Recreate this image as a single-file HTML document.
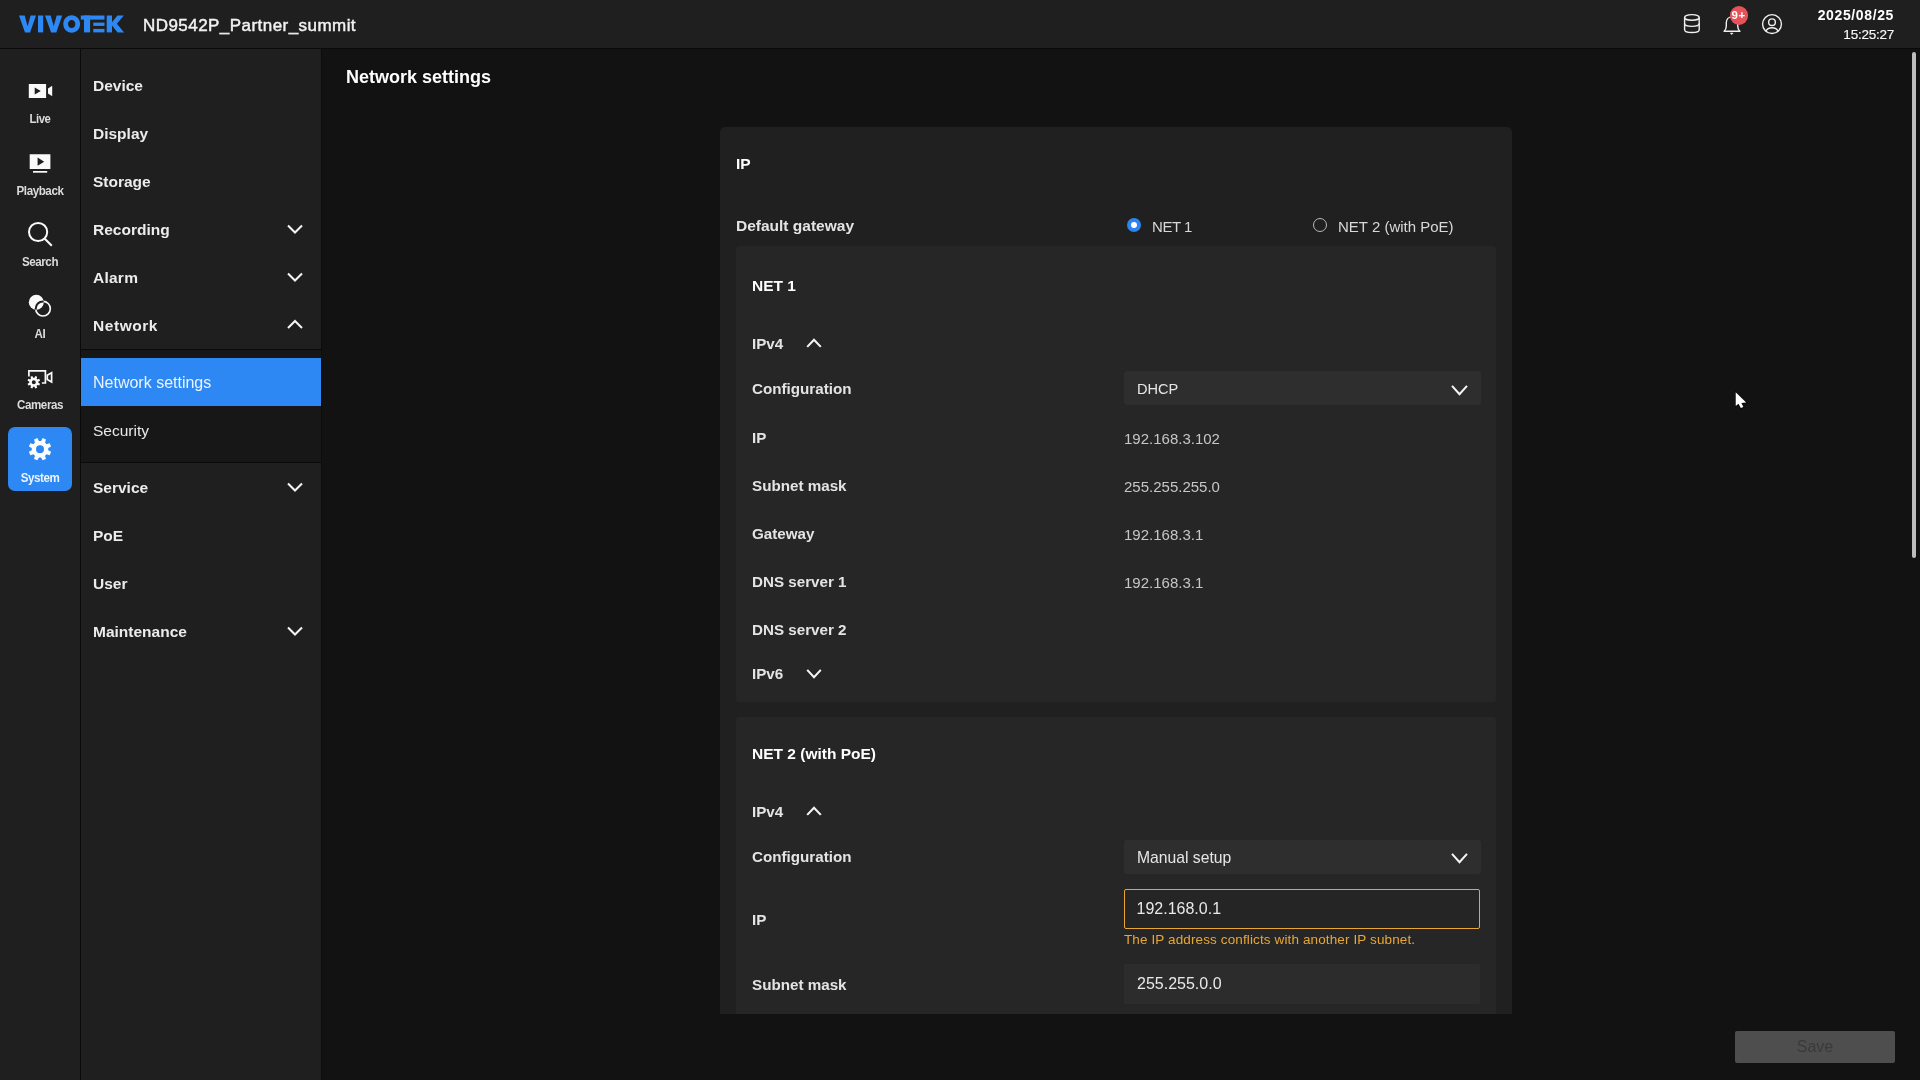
<!DOCTYPE html>
<html>
<head>
<meta charset="utf-8">
<title>Network settings</title>
<style>
*{box-sizing:border-box;margin:0;padding:0}
html,body{width:1920px;height:1080px;overflow:hidden;background:#121212}
body{position:relative;font-family:"Liberation Sans",sans-serif;color:#e6e6e6;font-size:15.5px}
.abs{position:absolute}
.t{position:absolute;white-space:nowrap;line-height:20px;height:20px}
.b{font-weight:700}
/* header */
#hdr{left:0;top:0;width:1920px;height:48px;background:#1f1f1f}
#hline{left:0;top:48px;width:1920px;height:1px;background:#0a0a0a}
/* icon rail */
#rail{left:0;top:49px;width:80px;height:1031px;background:#1f1f1f}
#vline1{left:80px;top:49px;width:1px;height:1031px;background:#0a0a0a}
#menu{left:81px;top:49px;width:240px;height:1031px;background:#1f1f1f}
#vline2{left:321px;top:49px;width:1px;height:1031px;background:#0c0c0c}
.rl{position:absolute;transform:scaleX(0.968);left:0;width:80px;text-align:center;font-weight:700;font-size:12px;letter-spacing:-0.45px;line-height:14px;color:#dcdcdc;white-space:nowrap}
.mi{position:absolute;left:93px;font-weight:700;font-size:15.5px;line-height:20px;color:#ececec;white-space:nowrap}
.ms{position:absolute;left:93px;font-weight:400;font-size:15.5px;line-height:20px;color:#e8e8e8;white-space:nowrap}
.chev{position:absolute}
/* card */
#card{left:720px;top:127px;width:792px;height:887px;background:#202020;border-radius:5px 5px 0 0}
.inner{position:absolute;left:736px;width:760px;background:#262626;border-radius:3px}
.lab{position:absolute;margin-top:0.8px;font-weight:700;font-size:15.200px;line-height:20px;color:#e4e4e4;white-space:nowrap}
.val{position:absolute;margin-top:0.5px;left:1124px;font-weight:400;font-size:15px;line-height:20px;color:#c6c6c6;white-space:nowrap}
.sel{position:absolute;left:1124px;width:357px;height:34px;background:#2e2e2e;border-radius:3px}
.sel span{position:absolute;left:13px;top:7.800px;font-size:15.7px;line-height:20px;color:#e6e6e6;white-space:nowrap}
.inp{position:absolute;left:1124px;width:356px;height:40px;background:#2c2c2c;border-radius:2px}
.inp span{position:absolute;left:13px;top:9.900px;font-size:16px;line-height:20px;color:#e8e8e8;white-space:nowrap}
</style>
</head>
<body>
<div id="layer" style="position:absolute;left:0;top:0;width:1920px;height:1080px;will-change:transform">
<!-- HEADER -->
<div id="hdr" class="abs"></div>
<div id="hline" class="abs"></div>
<!-- RAIL + MENU -->
<div id="rail" class="abs"></div>
<div id="vline1" class="abs"></div>
<div id="menu" class="abs"></div>
<div id="vline2" class="abs"></div>
<!-- logo -->
<svg class="abs" style="left:0;top:0" width="140" height="48" viewBox="0 0 140 48">
 <g fill="#2d88f4">
  <polygon points="19,15.5 24.7,15.5 27.6,26.2 30.6,15.5 36,15.5 30.1,32.4 25,32.4"/>
  <rect x="38" y="15.5" width="5.2" height="16.9"/>
  <polygon points="45,15.5 50.7,15.5 53.7,26.2 56.7,15.5 62.2,15.5 56.3,32.4 51.1,32.4"/>
  <path fill-rule="evenodd" d="M71.7 15.2c4.7 0 8.4 3.9 8.4 8.8s-3.7 8.8-8.4 8.8-8.4-3.9-8.4-8.8 3.700-8.800 8.400-8.800zm0 4.700c-2.100 0-3.700 1.800-3.700 4.100s1.600 4.100 3.700 4.100 3.700-1.800 3.700-4.100-1.600-4.100-3.700-4.100z"/>
  <rect x="80.8" y="15.500" width="23.700" height="4.100"/>
  <rect x="84" y="15.500" width="6.100" height="16.900"/>
  <rect x="93.300" y="22.600" width="11.200" height="3.300"/>
  <rect x="93.300" y="28.900" width="11.200" height="3.500"/>
  <rect x="106.700" y="15.500" width="5.300" height="16.900"/>
  <polygon points="112,22.300 117.400,15.500 123.800,15.500 116.900,23.800 124.100,32.400 117.600,32.400 112,25.600"/>
 </g>
</svg>
<div class="t" style="left:143px;top:15.500px;font-size:17px;-webkit-text-stroke:0.45px #f2f2f2;letter-spacing:0.45px;color:#f2f2f2">ND9542P_Partner_summit</div>
<!-- header icons -->
<svg class="abs" style="left:1676px;top:4px" width="112" height="40" viewBox="1676 4 112 40" fill="none" stroke="#f0f0f0" stroke-width="1.400">
 <!-- database -->
 <ellipse cx="1691.900" cy="17.400" rx="7.300" ry="2.800"/>
 <path d="M1684.600 17.400v12.300c0 1.600 3.300 2.800 7.300 2.800s7.300-1.200 7.300-2.800V17.400"/>
 <path d="M1684.600 23.600c0 1.600 3.300 2.800 7.300 2.800s7.300-1.200 7.300-2.800"/>
 <!-- bell -->
 <path d="M1724.100 31.300c1.500-1.300 2.200-3 2.200-5.300v-3.200c0-3.400 2.400-5.900 5.700-5.900s5.700 2.500 5.700 5.900v3.200c0 2.300 0.700 4 2.200 5.300z" stroke-linejoin="round"/>
 <path d="M1730.300 33.100h2.800l-1.400 1.500z" fill="#f0f0f0" stroke-width="0.600" stroke-linejoin="round"/>
 <!-- user -->
 <circle cx="1772" cy="24.100" r="9.450"/>
 <circle cx="1772" cy="22.200" r="3.350"/>
 <path d="M1765.700 31.400c1.300-2.500 3.500-3.600 6.300-3.600s5 1.100 6.300 3.600"/>
</svg>
<div class="abs" style="left:1729.500px;top:6px;width:18.800px;height:18.800px;border-radius:9.400px;background:#e5525a"></div>
<div class="t b" style="left:1728.600px;top:5px;width:20px;height:20px;line-height:20px;text-align:center;font-size:11.500px;color:#fff;letter-spacing:0.6px">9+</div>
<div class="t b" style="right:26px;top:5px;font-size:14px;letter-spacing:0.62px;color:#fff;text-align:right">2025/08/25</div>
<div class="t" style="right:26px;top:24.700px;font-size:13.500px;letter-spacing:-0.24px;color:#fafafa;-webkit-text-stroke:0.15px #fafafa;text-align:right">15:25:27</div>
<!-- scrollbar -->
<div class="abs" style="left:1912px;top:52px;width:4px;height:506px;border-radius:2px;background:#bdbdbd"></div>
<!--HEADER-END-->
<div class="abs" style="left:8px;top:427px;width:64px;height:64px;border-radius:7px;background:#2d88f4"></div>
<svg class="abs" style="left:0;top:49px" width="80" height="460" viewBox="0 49 80 460">
 <!-- live -->
 <g fill="#fafafa">
  <path fill-rule="evenodd" d="M28.800 84h17.300v14H28.800zM34.700 87.500v6.900l6.100-3.450z"/>
  <polygon points="48,88.600 52.200,85.800 52.200,96.200 48,93.400"/>
 </g>
 <!-- playback -->
 <g fill="#fafafa">
  <path fill-rule="evenodd" d="M29.700 154.200h20.700v14.800H29.700zM37.600 157.600v8.200l6.600-4.100z"/>
  <rect x="33" y="171" width="14.200" height="1.700"/>
 </g>
 <!-- search -->
 <g fill="none" stroke="#fafafa" stroke-width="2">
  <circle cx="38.100" cy="232" r="9.100"/>
  <path d="M44.800 238.700l7 7" stroke-linecap="butt"/>
 </g>
 <!-- AI -->
 <defs><clipPath id="aic"><circle cx="36.300" cy="302.300" r="7.500"/></clipPath></defs>
 <circle cx="36.300" cy="302.300" r="7.500" fill="#fafafa"/>
 <circle cx="43" cy="308.700" r="7.300" fill="none" stroke="#fafafa" stroke-width="1.650"/>
 <circle cx="43" cy="308.700" r="7.300" fill="none" stroke="#1f1f1f" stroke-width="2" clip-path="url(#aic)"/>
 <!-- cameras -->
 <g fill="none" stroke="#fafafa" stroke-width="1.700">
  <path d="M28.900 376.500V370.900h16.500v12.100h-3.500"/>
  <path d="M47.300 375.300l4.300-2.500v9.200l-4.300-2.500z"/>
 </g>
 <path fill="#fafafa" fill-rule="evenodd" d="M34.41 377.64 L35.29 375.98 L37.14 376.74 L36.59 378.54 L37.46 379.41 L39.26 378.86 L40.02 380.71 L38.36 381.59 L38.36 382.81 L40.02 383.69 L39.26 385.54 L37.46 384.99 L36.59 385.86 L37.14 387.66 L35.29 388.42 L34.41 386.76 L33.19 386.76 L32.31 388.42 L30.46 387.66 L31.01 385.86 L30.14 384.99 L28.34 385.54 L27.58 383.69 L29.24 382.81 L29.24 381.59 L27.58 380.71 L28.34 378.86 L30.14 379.41 L31.01 378.54 L30.46 376.74 L32.31 375.98 L33.19 377.64Z M31.80 382.20a2.0 2.0 0 1 0 4.0 0a2.0 2.0 0 1 0 -4.0 0Z"/>
 <!-- system -->
 <path fill="#fcfcfc" fill-rule="evenodd" d="M41.10 440.97 L42.66 438.11 L45.96 439.48 L45.04 442.60 L46.60 444.16 L49.72 443.24 L51.09 446.54 L48.23 448.10 L48.23 450.30 L51.09 451.86 L49.72 455.16 L46.60 454.24 L45.04 455.80 L45.96 458.92 L42.66 460.29 L41.10 457.43 L38.90 457.43 L37.34 460.29 L34.04 458.92 L34.96 455.80 L33.40 454.24 L30.28 455.16 L28.91 451.86 L31.77 450.30 L31.77 448.10 L28.91 446.54 L30.28 443.24 L33.40 444.16 L34.96 442.60 L34.04 439.48 L37.34 438.11 L38.90 440.97Z M36.00 449.20a4.0 4.0 0 1 0 8.0 0a4.0 4.0 0 1 0 -8.0 0Z"/>
</svg>
<div class="rl" style="top:112px;transform:scaleX(0.94)">Live</div>
<div class="rl" style="top:184px">Playback</div>
<div class="rl" style="top:255px">Search</div>
<div class="rl" style="top:327px">AI</div>
<div class="rl" style="top:398px">Cameras</div>
<div class="rl" style="top:470.500px;color:#eaf4ff">System</div>
<!--RAIL-END-->
<div class="abs" style="left:81px;top:349px;width:240px;height:1px;background:#0a0a0a"></div>
<div class="abs" style="left:81px;top:350px;width:240px;height:112px;background:#171717"></div>
<div class="abs" style="left:81px;top:462px;width:240px;height:1px;background:#0a0a0a"></div>
<div class="abs" style="left:81px;top:358px;width:240px;height:48px;background:#2d88f4"></div>
<div class="ms" style="top:372.500px;color:#eaf3ff;font-size:16px">Network settings</div>
<div class="ms" style="top:420.500px">Security</div>
<div class="mi" style="top:75.75px">Device</div>
<div class="mi" style="top:123.75px">Display</div>
<div class="mi" style="top:171.75px">Storage</div>
<div class="mi" style="top:219.75px">Recording</div>
<div class="mi" style="top:267.75px;letter-spacing:0.25px">Alarm</div>
<div class="mi" style="top:315.75px;letter-spacing:0.55px">Network</div>
<div class="mi" style="top:477.75px">Service</div>
<div class="mi" style="top:525.75px">PoE</div>
<div class="mi" style="top:573.75px">User</div>
<div class="mi" style="top:621.75px">Maintenance</div>
<svg class="abs" style="left:280px;top:49px" width="32" height="620" viewBox="280 49 32 620" fill="none" stroke="#f4f4f4" stroke-width="2.100">
<path d="M288.0 225.5L295 232.5L302.0 225.5"/>
<path d="M288.0 273.5L295 280.5L302.0 273.5"/>
<path d="M288.0 328.0L295 321.0L302.0 328.0"/>
<path d="M288.0 483.5L295 490.5L302.0 483.5"/>
<path d="M288.0 627.5L295 634.5L302.0 627.5"/>
</svg>
<!--MENU-END-->
<div class="t b" style="left:346px;top:66px;font-size:18px;line-height:22px;height:22px;color:#fff">Network settings</div>
<div id="card" class="abs"></div>
<div class="lab" style="left:736px;top:153px;color:#fff;font-size:15.500px">IP</div>
<div class="lab" style="left:736px;top:215px;font-size:15.500px">Default gateway</div>
<!-- radios -->
<div class="abs" style="left:1127px;top:218px;width:14px;height:14px;border-radius:7px;background:#2d84ee"></div>
<div class="abs" style="left:1131px;top:222px;width:6px;height:6px;border-radius:3px;background:#fff"></div>
<div class="t" style="left:1152px;top:216.500px;font-size:15px;letter-spacing:-0.45px;color:#d8d8d8">NET 1</div>
<div class="abs" style="left:1313px;top:218px;width:14px;height:14px;border-radius:7px;border:1.300px solid #b8b8b8"></div>
<div class="t" style="left:1338px;top:216.500px;font-size:15px;color:#d8d8d8">NET 2 (with PoE)</div>
<!-- NET 1 -->
<div class="inner" style="top:246px;height:456px"></div>
<div class="lab" style="left:752px;top:275px;color:#fff;font-size:15.500px">NET 1</div>
<div class="lab" style="left:752px;top:333px">IPv4</div>
<div class="lab" style="left:752px;top:378px">Configuration</div>
<div class="sel" style="top:371px"><span style="font-size:14.600px;top:8.400px">DHCP</span></div>
<div class="lab" style="left:752px;top:427px">IP</div>
<div class="val" style="top:428px">192.168.3.102</div>
<div class="lab" style="left:752px;top:475px">Subnet mask</div>
<div class="val" style="top:476px">255.255.255.0</div>
<div class="lab" style="left:752px;top:523px">Gateway</div>
<div class="val" style="top:524px">192.168.3.1</div>
<div class="lab" style="left:752px;top:571px">DNS server 1</div>
<div class="val" style="top:572px">192.168.3.1</div>
<div class="lab" style="left:752px;top:619px">DNS server 2</div>
<div class="lab" style="left:752px;top:663px">IPv6</div>
<!-- NET 2 -->
<div class="inner" style="top:717px;height:297px;border-radius:3px 3px 0 0"></div>
<div class="lab" style="left:752px;top:743px;color:#fff;font-size:15.500px">NET 2 (with PoE)</div>
<div class="lab" style="left:752px;top:801px">IPv4</div>
<div class="lab" style="left:752px;top:846px">Configuration</div>
<div class="sel" style="top:840px"><span>Manual setup</span></div>
<div class="lab" style="left:752px;top:909px">IP</div>
<div class="inp" style="top:889px;border:1.500px solid #e8a735;background:#252525"><span style="left:11.500px;top:8.700px">192.168.0.1</span></div>
<div class="t" style="left:1124px;top:929.900px;font-size:13.500px;color:#e8a735;letter-spacing:0.12px">The IP address conflicts with another IP subnet.</div>
<div class="lab" style="left:752px;top:974px">Subnet mask</div>
<div class="inp" style="top:964px"><span>255.255.0.0</span></div>
<svg class="abs" style="left:800px;top:330px" width="680" height="540" viewBox="800 330 680 540" fill="none" stroke="#f4f4f4" stroke-width="2.100">
<path d="M807.2 346.90000000000003L814 339.7L820.8 346.90000000000003"/>
<path d="M807.2 669.9L814 677.1L820.8 669.9"/>
<path d="M807.2 814.9L814 807.6999999999999L820.8 814.9"/>
<path d="M1452.0 385.9L1459.5 394.1L1467.0 385.9"/>
<path d="M1452.0 853.9L1459.5 862.1L1467.0 853.9"/>
</svg>
<!-- save -->
<div class="abs" style="left:1735px;top:1031px;width:160px;height:32px;border-radius:2px;background:#4e4e4e"></div>
<div class="t" style="left:1735px;top:1037px;width:160px;text-align:center;font-size:16px;color:#3a3a3a">Save</div>
<!-- cursor -->
<svg class="abs" style="left:1730px;top:388px" width="24" height="26" viewBox="1730 388 24 26"><path d="M1735.700 392.300V406.000L1738.500 403.700L1740.800 408.000L1743.400 407.000L1741.400 403.000L1746.200 402.600Z" fill="#fff" stroke="#060606" stroke-width="1.400" stroke-linejoin="miter" paint-order="stroke"/></svg>
<!--MAIN-END-->
</div>
</body>
</html>
